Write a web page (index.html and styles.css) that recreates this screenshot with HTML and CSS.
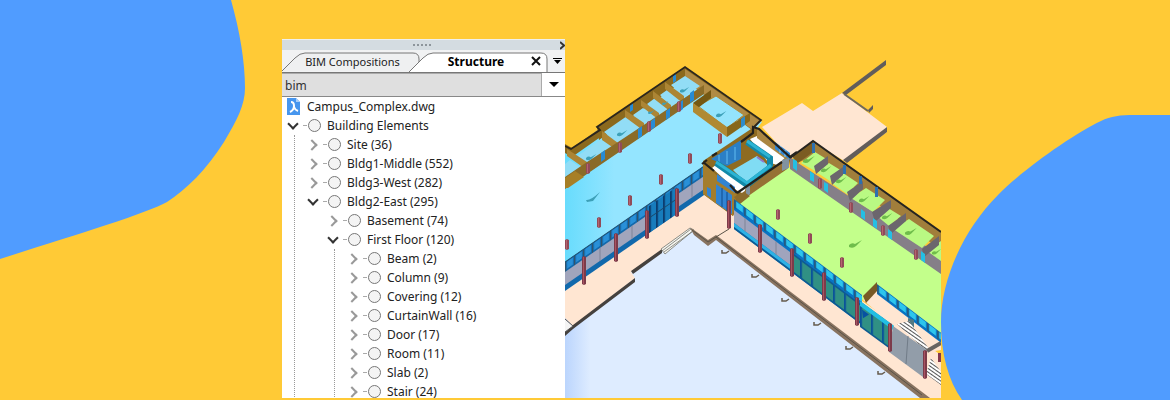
FILE: index.html
```html
<!DOCTYPE html>
<html lang="en">
<head>
<meta charset="utf-8">
<meta name="viewport" content="width=device-width, initial-scale=1">
<title>BIM structure browser</title>
<link rel="stylesheet" href="styles.css">
</head>
<body>
<main class="banner">
  <svg class="blob blob-left" width="246" height="260" viewBox="0 0 246 260" aria-hidden="true"><path d="M0 0H231C240 32 245 62 245 88C245 105 237 120 224 142C207 169 186 190 167 202C145 214 75 235 0 259Z"/></svg>
  <svg class="blob blob-right" width="229" height="286" viewBox="941 114 229 286" aria-hidden="true"><path d="M1170 115H1135C1120 115 1111 116 1101 121C1073 134 1020 172 998 195C963 230 941 280 941 322C941 354 948 380 962 400H1170Z"/></svg>

  <section class="panel" aria-label="Structure panel">
    <div class="grip"><span class="grip-dots"></span><button class="grip-close" aria-label="Close panel"><svg width="5" height="9" viewBox="0 0 5 9"><path d="M0 1L4 4.500L0 8"/></svg></button></div>
    <div class="tabs" role="tablist">
      <svg class="tab-lines" width="283" height="23" viewBox="0 0 283 23" aria-hidden="true">
        <path class="tab-back" d="M0 21L13 8Q18 3 23 3H131Q137 3 137 9V21"/>
        <path class="tab-front" d="M127 22L141 8Q146 3 151 3H259Q265 3 265 9V22"/>
      </svg>
      <button class="tab" role="tab" aria-selected="false">BIM Compositions</button>
      <button class="tab active" role="tab" aria-selected="true">Structure</button>
      <button class="tab-close" aria-label="Close tab"><svg width="10" height="10" viewBox="0 0 10 10"><path d="M1 1L9 9M9 1L1 9"/></svg></button>
      <button class="tab-menu" aria-label="Tab list"><svg width="9" height="7" viewBox="0 0 9 7"><path d="M0 0H9V1H0ZM1 2H8L4.500 6Z"/></svg></button>
    </div>
    <div class="search">
      <input class="search-box" type="text" value="bim" aria-label="Search structure">
      <button class="search-menu" aria-label="Search history"><svg width="10" height="6" viewBox="0 0 10 6"><path d="M0 0H10L5 5Z"/></svg></button>
    </div>
    <div class="tree">
      <div class="root"><svg width="13" height="17" viewBox="0 0 13 17" aria-hidden="true"><path fill="#4796ee" d="M0 0H9L13 4V17H0Z"/><path fill="#a9d0fb" d="M9 0V4H13Z"/><path fill="none" stroke="#fff" stroke-width="2" d="M4 4Q7 4 7 8Q7 12 3 14M7 9Q8 12 11 13"/></svg>Campus_Complex.dwg</div>
      <ul>
        <li><div class="row"><button class="open" aria-label="Collapse"></button><i></i><span>Building Elements</span></div>
          <ul class="guide">
            <li><div class="row"><button aria-label="Expand"></button><i></i><span>Site (36)</span></div></li>
            <li><div class="row"><button aria-label="Expand"></button><i></i><span>Bldg1-Middle (552)</span></div></li>
            <li><div class="row"><button aria-label="Expand"></button><i></i><span>Bldg3-West (282)</span></div></li>
            <li><div class="row"><button class="open" aria-label="Collapse"></button><i></i><span>Bldg2-East (295)</span></div>
              <ul>
                <li><div class="row"><button aria-label="Expand"></button><i></i><span>Basement (74)</span></div></li>
                <li><div class="row"><button class="open" aria-label="Collapse"></button><i></i><span>First Floor (120)</span></div>
                  <ul class="guide">
                    <li><div class="row"><button aria-label="Expand"></button><i></i><span>Beam (2)</span></div></li>
                    <li><div class="row"><button aria-label="Expand"></button><i></i><span>Column (9)</span></div></li>
                    <li><div class="row"><button aria-label="Expand"></button><i></i><span>Covering (12)</span></div></li>
                    <li><div class="row"><button aria-label="Expand"></button><i></i><span>CurtainWall (16)</span></div></li>
                    <li><div class="row"><button aria-label="Expand"></button><i></i><span>Door (17)</span></div></li>
                    <li><div class="row"><button aria-label="Expand"></button><i></i><span>Room (11)</span></div></li>
                    <li><div class="row"><button aria-label="Expand"></button><i></i><span>Slab (2)</span></div></li>
                    <li><div class="row"><button aria-label="Expand"></button><i></i><span>Stair (24)</span></div></li>
                  </ul>
                </li>
              </ul>
            </li>
          </ul>
        </li>
      </ul>
    </div>
  </section>

  <div class="model">
  <svg viewBox="565 39 376 359" role="img" aria-label="Isometric view of the campus building">
    <defs>
      <linearGradient id="ground"><stop offset="0" stop-color="#bbd5fd"/><stop offset=".07" stop-color="#deecff"/></linearGradient>
      <linearGradient id="cyan"><stop offset="0" stop-color="#68dcfd"/><stop offset=".25" stop-color="#94e5ff"/></linearGradient>
      <pattern id="win" width="9" height="40" patternUnits="userSpaceOnUse"><rect width="9" height="40" fill="#1269ac"/><rect x="2" y="1" width="6" height="7" fill="#2990d8"/><rect width="1" height="10" fill="#345266"/></pattern>
      <pattern id="winR" width="10" height="40" patternUnits="userSpaceOnUse"><rect width="10" height="40" fill="#0873c4"/><rect x="2" y="1" width="7" height="6" fill="#2dc5ec"/><rect width="2" height="9" fill="#245c83"/></pattern>
      <pattern id="glass" width="11" height="40" patternUnits="userSpaceOnUse"><rect width="11" height="40" fill="#309084"/><rect width="2" height="40" fill="#0a539a"/></pattern>
      <pattern id="deep" width="7" height="40" patternUnits="userSpaceOnUse"><rect width="7" height="40" fill="#177cbc"/><rect width="2" height="40" fill="#0b3d70"/></pattern>
      <pattern id="hatch" width="3" height="3" patternUnits="userSpaceOnUse" patternTransform="rotate(35)"><rect width="3" height="3" fill="#fff"/><rect width="3" height="1" fill="#555"/></pattern>
      <path id="shrub" d="M0 5Q3 2 6 4L13 0L7 6Q4 9 0 7Z"/>
      <g id="post"><path fill="#7c3b4a" d="M-2 1L0 0L2 1V28L0 29L-2 28Z"/><path fill="#a95361" d="M-1 1H0V28H-1Z"/></g>
      <g id="stub"><path fill="#914b58" d="M-2 1L0 0L2 1V10L0 11L-2 10Z"/><path fill="#b56370" d="M-1 1H0V10H-1Z"/></g>
      <path id="hook" fill="none" stroke="#655b4e" stroke-width="1.500" d="M0 0V3H4L7 1"/>
    </defs>

    <!-- rear terrace -->
    <path fill="#ffe6d2" d="M762 127L802 103L813 111L842 93L887 127V132L846 162L813 142L791 159Z"/>
    <path fill="#625d5b" d="M842 93L886 60V65L846 95ZM868 110L873 105V109L869 113ZM887 127V132L847 163L843 160Z"/>
    <path stroke="#6d685f" stroke-width="2" d="M844 94L868 111"/>

    <!-- ground and front terrace -->
    <path fill="url(#ground)" d="M565 310L630 268L690 222L720 234L925 398H565Z"/>
    <path fill="#ffe6d2" d="M565 289L703 190L738 216L941 355V398H922L760 273L716 237L708 243L690 229L662 250L631 272L635 278L573 326L565 318Z"/>
    <path fill="#45413e" d="M573 325L635 278V282L573 329L565 336V332ZM631 271L662 249V253L633 274Z"/>
    <path fill="#f4f4f4" stroke="#555" d="M565 319L573 326L565 332"/>
    <path fill="#f5f5ef" stroke="#72736c" stroke-width=".8" d="M661 249L690 228L694 230L665 254ZM662 251L691 229M664 252L693 231"/>
    <path fill="#887360" d="M690 228L694 230L708 240L716 235L930 398H920L716 240L708 246L694 235Z"/>
    <path fill="none" stroke="#5a5348" d="M692 230L708 242L716 237L922 395M716 237L729 229"/>
    <use href="#hook" x="722" y="250"/><use href="#hook" x="752" y="274"/><use href="#hook" x="782" y="298"/><use href="#hook" x="814" y="322"/><use href="#hook" x="846" y="346"/><use href="#hook" x="878" y="371"/>

    <!-- west wing floor -->
    <path fill="url(#cyan)" d="M565 147L572 149L599 129L685 67L762 122L752 135L704 172L565 268Z"/>
    <path fill="#8b691d" d="M565 144L572 148L599 129L599 138L572 157L565 153ZM597 127L685 67L760 120L752 130L685 80L599 140Z"/>
    <path fill="#b08b45" d="M685 69L760 121L753 130L685 81Z"/>
    <path fill="#92ddf6" d="M604 132L627 116L642 127L618 144ZM633 115L643 108L656 117L643 125ZM647 104L655 98L669 109L659 116ZM660 95L667 90L682 99L672 106ZM671 85L685 76L700 86L684 97ZM576 157L600 140L614 147L588 165ZM565 164L570 160L580 167L565 178Z"/>
    <g fill="#ac8534">
      <path d="M567 149L587 162V170L567 156ZM602 131L618 143V151L602 140ZM625 110L644 123V131L625 117ZM641 100L659 113V120L641 106ZM653 91L671 105V112L653 98ZM665 82L684 96V104L665 89Z"/>
    </g>
    <path fill="#8a6b28" d="M565 177L587 162L618 142L704 85V94L587 174L565 189Z"/>
    <path fill="#a77f26" d="M565 178L575 171L584 177L568 188H565Z"/>
    <g fill="#278bd4"><path d="M601 153L605 150V159L601 162ZM638 129L642 126V136L638 139ZM651 121L655 118V127L651 130ZM666 111L670 108V117L666 120ZM679 103L683 100V109L679 112ZM690 93L694 90V100L690 103ZM630 104L633 102V110L630 112ZM673 75L676 73V81L673 83Z"/></g>
    <path fill="#94e4fc" stroke="#b08b36" d="M698 106L716 96L744 115L727 128Z"/>
    <path fill="#755813" d="M693 103L711 90V98L698 108Z"/>
    <path fill="#b08933" d="M693 103L727 127V137L693 112Z"/>
    <path fill="#876719" d="M727 127L750 113V121L727 137Z"/>
    <path fill="#2e8cc9" d="M741 119L745 116V125L741 128Z"/>
    <path fill="none" stroke="#2b261d" stroke-width="1.800" d="M565 146L571 149L600 130L597 127L685 67L761 120L753 128"/>
    <g fill="#3da0b8"><use href="#shrub" transform="translate(617 130) scale(.8)"/><use href="#shrub" transform="translate(586 154) scale(.8)"/><use href="#shrub" transform="translate(680 87) scale(.7)"/><use href="#shrub" transform="translate(716 111) scale(.8)"/><use href="#shrub" transform="translate(648 110) scale(.5)"/><use href="#shrub" transform="translate(662 101) scale(.5)"/><path d="M586 200Q590 201 600 192L593 201L587 202Z"/></g>
    <use href="#stub" x="588" y="163"/><use href="#stub" x="620" y="142"/><use href="#stub" x="649" y="121"/><use href="#stub" x="679" y="101"/>
    <use href="#stub" x="567" y="239"/><use href="#stub" x="599" y="217"/><use href="#stub" x="630" y="195"/><use href="#stub" x="661" y="174"/><use href="#stub" x="690" y="153"/><use href="#stub" x="720" y="133"/>

    <!-- west wing facade -->
    <g transform="matrix(1 -.69 0 1 565 262)">
      <rect width="142" height="29" fill="url(#win)"/>
      <rect y="10" width="82" height="13" fill="#a1a5bc"/>
      <rect x="83" y="2" width="29" height="27" fill="url(#deep)"/>
      <rect x="114" y="10" width="26" height="13" fill="#a1a5bc"/>
      <path stroke="#7f8398" d="M35 10V23M67 10V23M127 10V23"/>
      <path stroke="#1c4867" d="M0 0H142M83 14H112"/>
    </g>
    <use href="#post" x="584" y="256"/><use href="#post" x="616" y="233"/><use href="#post" x="647" y="210"/><use href="#post" x="677" y="188"/>

    <!-- entrance court -->
    <path fill="#8e6b21" d="M703 161L754 127L791 156L788 170L740 203L733 216L703 194Z"/>
    <path fill="#2b7fc6" d="M711 159L741 140V159L727 166Z"/>
    <path stroke="#63bdf1" stroke-width="1" d="M719 155V162M727 151V164M735 147V160"/>
    <path fill="#fff" d="M750 139L757 136L786 157L777 165L768 162Z"/>
    <path fill="#aa8641" d="M757 129L790 154L787 160L757 138Z"/>
    <path fill="#3188d5" d="M775 142L790 153V160L775 149Z"/>
    <path stroke="#8bcdf3" d="M780 146V153M785 150V157"/>
    <path fill="#80dcf4" d="M733 170L757 156L769 166L746 183Z"/>
    <path fill="#fff" d="M712 168L717 164L746 187L744 194L736 190Z"/>
    <path fill="none" stroke="#1289a8" stroke-width="6" d="M716 163L747 185L772 166M747 142L770 158V166"/>
    <path fill="none" stroke="#2cb4d4" stroke-width="3" d="M716 162L747 183L771 165M747 141L770 157"/>
    <path stroke="#8d77cb" stroke-width="2" d="M757 157L764 162"/>
    <path fill="#a47d2c" d="M703 163L737 193L733 216L703 194Z"/>
    <path fill="#3184d3" d="M716 184L732 195V214L716 203ZM707 187L711 189V198L707 195ZM717 174L735 187V193L717 181Z"/>
    <path stroke="#114b8b" d="M722 188V207M727 192V211"/>
    <path fill="#967134" d="M738 196L782 163V175L745 203Z"/>
    <path fill="#8192a0" d="M746 187L750 184V194L746 197ZM782 160L789 158V168L782 171Z"/>
    <path fill="none" stroke="#23211d" stroke-width="2.200" d="M703 162L714 171M730 185L737 193M712 156L717 153M702 164L707 160M737 193L782 162M741 142L753 133V127L759 129L790 157L797 152"/>

    <!-- east wing -->
    <path fill="#c3ff8b" d="M734 206L790 167L800 173L941 268V341L877 290L863 300Z"/>
    <path fill="#8c6b2c" d="M734 197L744 192L750 196L740 204Z"/>
    <path fill="#a17e3b" d="M792 156L813 141L941 232V250L813 157L796 163Z"/>
    <path fill="#7b5c22" d="M792 156L813 141V152L798 163Z"/>
    <path fill="#857f88" d="M790 157L798 163L941 256V274L790 169Z"/>
    <path fill="#b9f983" d="M801 163L815 152L828 160L815 171ZM816 172L829 163L842 171L830 181ZM830 182L843 173L858 183L847 194ZM851 198L866 188L885 200L873 212ZM877 216L888 208L901 216L889 226ZM893 229L909 219L934 236L922 248ZM927 251L941 241V261Z"/>
    <g fill="#6b666d"><path d="M814 166L828 156V164L816 174ZM830 176L843 167V175L832 185ZM847 192L863 181V189L850 201ZM872 212L891 200V208L875 222ZM888 226L906 213V221L891 234ZM922 249L939 236V245L924 257Z"/></g>
    <path fill="none" stroke="#262420" stroke-width="2" d="M790 158L813 141L941 232"/>
    <g fill="#2c70b0"><path d="M812 143H815V153H812ZM843 165H846V174H843ZM859 176H862V184H859ZM875 187H878V197H875Z"/></g>
    <g fill="#24bfe4"><path d="M793 159L797 161V171L793 168ZM810 171L814 174V182L810 180ZM824 182L828 184V193L824 190ZM861 209L865 212V220L861 217ZM873 218L877 221V229L873 226ZM888 229L892 232V240L888 237ZM921 251L925 254V263L921 260Z"/></g>
    <use href="#stub" x="820" y="178"/><use href="#stub" x="851" y="202"/><use href="#stub" x="883" y="225"/><use href="#stub" x="916" y="249"/>
    <use href="#stub" x="778" y="209"/><use href="#stub" x="810" y="233"/><use href="#stub" x="842" y="257"/>
    <g fill="#6fbd4b"><use href="#shrub" x="849" y="240"/><use href="#shrub" transform="translate(803 156) scale(.9)"/><use href="#shrub" transform="translate(821 166) scale(.8)"/><use href="#shrub" transform="translate(836 177) scale(.8)"/><use href="#shrub" transform="translate(859 196) scale(.8)"/><use href="#shrub" transform="translate(882 213) scale(.8)"/><use href="#shrub" transform="translate(905 228) scale(.9)"/><use href="#shrub" transform="translate(932 249) scale(.7)"/></g>

    <!-- east wing facade -->
    <g transform="matrix(1 .75 0 1 734 199)">
      <rect width="128" height="30" fill="url(#winR)"/>
      <rect y="11" width="60" height="13" fill="#a0a4bd"/>
      <rect y="24" width="60" height="4" fill="#2db2e5"/>
      <path stroke="#7f8398" d="M11 11V24M42 11V24"/>
      <rect x="60" y="11" width="67" height="18" fill="url(#glass)"/>
      <path stroke="#0e5b92" stroke-width="2" d="M0 29H128M60 11H128"/>
    </g>
    <path fill="#ffe6d2" d="M863 300L877 289L941 339V350L929 352L895 327Z"/>
    <path fill="#785926" d="M863 296L877 282V291L866 303Z"/>
    <g transform="matrix(1 .76 0 1 877 284)"><rect width="64" height="10" fill="url(#winR)"/></g>
    <path fill="#537982" d="M908 318L914 320V330L908 326Z"/>
    <g transform="matrix(1 .73 0 1 860 301)"><rect width="31" height="25" fill="url(#glass)"/><rect width="34" height="5" fill="#22bfe4"/><path fill="#0751a2" d="M2 7H9L3 15Z"/><path stroke="#0e5b92" stroke-width="2" d="M0 25H31"/></g>
    <path fill="url(#hatch)" d="M897 324L909 321L929 349L925 350Z"/>
    <path fill="#929da9" d="M893 326L927 350L923 377L889 352Z"/>
    <path stroke="#717c88" d="M908 336L906 364"/>
    <path fill="none" stroke="#686461" stroke-width="4" d="M927 351L941 343"/>
    <path fill="url(#hatch)" d="M931 358L941 372V385L926 374Z"/>
    <use href="#post" x="729" y="200"/><use href="#post" x="760" y="224"/><use href="#post" x="792" y="248"/><use href="#post" x="824" y="272"/><use href="#post" x="857" y="297"/><use href="#post" x="890" y="323"/><use href="#post" x="925" y="350"/>
    <path fill="#84394c" d="M938 353H941V362H938Z"/>
  </svg>
  </div>
</main>
</body>
</html>
```
FILE: styles.css
```css
* { box-sizing: border-box; }

body {
  margin: 0;
  font-family: "Noto Sans", "Open Sans", sans-serif;
  font-size: 12px;
  color: #222;
}

button {
  padding: 0;
  border: 0;
  background: none;
  color: inherit;
  font: inherit;
}

.banner {
  position: relative;
  display: grid;
  grid-template-columns: 282fr 283px 376px 229fr;
  grid-template-rows: minmax(0, 1fr);
  height: 100vh;
  padding: 39px 0 2px;
  overflow: hidden;
  background: #ffca36;
}

.blob { position: absolute; fill: #509cff; }
.blob-left { top: 0; left: 0; }
.blob-right { right: 0; bottom: 0; }

.panel {
  position: relative;
  grid-column: 2;
  display: flex;
  flex-direction: column;
  background: #fff;
}

.grip {
  display: flex;
  flex: none;
  align-items: center;
  height: 11px;
  border-top: 1px solid #eef0ee;
  background: #d4dce1;
}

.grip-dots {
  width: 19px;
  height: 2px;
  margin-left: auto;
  margin-right: 128px;
  background: repeating-linear-gradient(90deg, #8d959b 0 2px, transparent 2px 4px);
}

.grip-close { display: flex; }
.grip-close svg { fill: none; stroke: #333; stroke-width: 2; }

.tabs {
  position: relative;
  display: flex;
  flex: none;
  align-items: center;
  height: 23px;
  border-bottom: 1px solid #777;
  background: #f1f2f3;
  font-size: 11px;
}

.tab-lines { position: absolute; top: 0; left: 0; stroke: #777; }
.tab-back { fill: #eff0f1; }
.tab-front { fill: #fff; }

.tab { position: relative; width: 141px; text-align: center; }
.tab.active { width: 106px; color: #000; font-size: 12px; font-weight: 700; }

.tab-close,
.tab-menu { position: relative; display: flex; justify-content: center; }
.tab-close { width: 14px; }
.tab-close svg { fill: none; stroke: #111; stroke-width: 2; }
.tab-menu { flex: 1; padding-left: 6px; }

.search {
  display: flex;
  flex: none;
  height: 24px;
  border-bottom: 1px solid #888;
  background: #fff;
}

.search-box {
  flex: 1;
  min-width: 0;
  padding: 0 3px;
  border: 1px solid #aaa;
  border-bottom: 0;
  border-left: 0;
  border-radius: 0;
  background: #dfdfdf;
  color: #333;
  font: inherit;
  outline: 0;
}

.search-menu { display: flex; align-items: center; justify-content: center; width: 23px; }

.tree { line-height: 19px; }
.tree ul { position: relative; margin: 0; padding: 0; list-style: none; }
.tree ul ul { padding-left: 20px; }

.guide::before {
  content: "";
  position: absolute;
  top: 0;
  bottom: 4px;
  left: 12px;
  border-left: 1px dotted #999;
}

.root { display: flex; align-items: center; gap: 7px; height: 19px; padding-left: 5px; }

.row { display: flex; align-items: center; height: 19px; }

.row button {
  display: flex;
  flex: none;
  align-items: center;
  justify-content: center;
  width: 21px;
  height: 19px;
}

.row button::before {
  content: "";
  width: 6px;
  height: 6px;
  margin-right: 2px;
  border: solid #999;
  border-width: 2px 2px 0 0;
  transform: rotate(45deg);
}

.row .open::before {
  margin: 0 0 3px;
  border-color: #333;
  transform: rotate(135deg);
}

.row i {
  display: flex;
  flex: none;
  align-items: center;
  width: 16px;
}

.row i::before {
  content: "";
  flex: none;
  width: 4px;
  margin-right: 1px;
  border-top: 1px dashed #aaa;
}

.row i::after {
  content: "";
  flex: none;
  width: 11px;
  height: 11px;
  border: 1px solid #777;
  border-radius: 50%;
  background: #f4f4f4;
}

.row span { margin-left: 8px; white-space: nowrap; }

.model { grid-column: 3; position: relative; overflow: hidden; }
.model svg { display: block; width: 100%; }
```
